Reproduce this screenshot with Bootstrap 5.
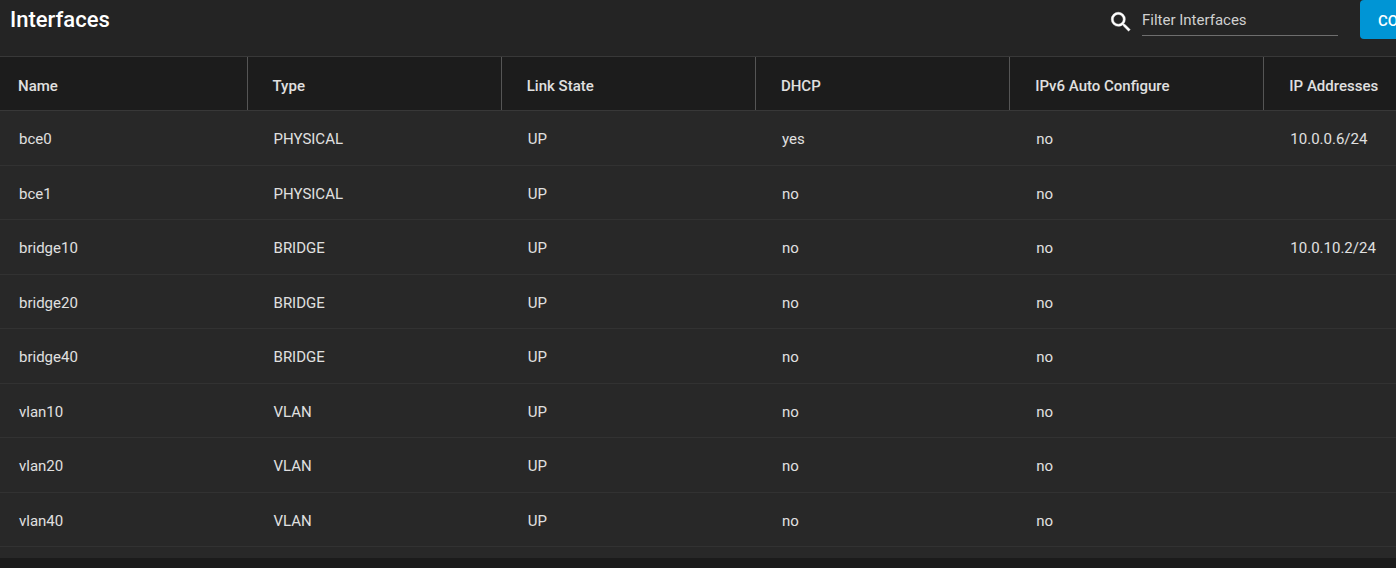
<!DOCTYPE html>
<html lang="en">
<head>
<meta charset="utf-8">
<meta name="viewport" content="width=device-width, initial-scale=1">
<title>Interfaces</title>
<link href="https://cdn.jsdelivr.net/npm/bootstrap@5.3.0/dist/css/bootstrap.min.css" rel="stylesheet">
<style>
  body { background: #1b1b1b; color: #e0e0e0; font-family: Roboto, "Liberation Sans", sans-serif; font-size: 15px; line-height: 20px; }
  .panel { background: #282828; padding-bottom: 11px; }
  .toolbar { background: #242424; height: 56px; padding-left: 10px; }
  .title { font-size: 22px; line-height: 40px; font-weight: 500; color: #fff; }
  .search-icon { width: 26px; height: 26px; margin: 9px 8px 0 0; fill: #fff; stroke: #fff; stroke-width: .4; }
  .filter { width: 196px; height: 36px; padding: 4px 0 0; color: #e0e0e0; background: transparent; border: 0; border-bottom: 1px solid #6e6e6e; border-radius: 0; outline: 0; }
  .filter::placeholder { color: #d0d0d0; opacity: 1; }
  .columns-slot { width: 36px; margin-left: 22px; }
  .btn-columns { --bs-btn-color: #fff; --bs-btn-bg: #0095d5; --bs-btn-border-color: #0095d5; --bs-btn-hover-color: #fff; --bs-btn-hover-bg: #0085be; height: 39px; padding: 3px 18px 0; border: 0; border-radius: 4px; font-size: 15px; font-weight: 500; }
  .iface-table { table-layout: fixed; font-size: 15px; line-height: 20px; border-collapse: separate; border-spacing: 0; }
  .iface-table th, .iface-table td { color: #e0e0e0; vertical-align: middle; white-space: nowrap; }
  .iface-table th { height: 55px; padding: 4px 0 0 26px; background: #1c1c1c; font-weight: 500; border-top: 1px solid #383838; border-bottom: 1px solid #383838; }
  .iface-table th + th { background: linear-gradient(#555, #555) left / 1px 100% no-repeat #1c1c1c; }
  .iface-table td { padding: 2px 0 0 27px; background: #282828; border-bottom: 1px solid #323232; }
  .iface-table th:first-child { padding-left: 18px; }
  .iface-table td:first-child { padding-left: 19px; }
  .iface-table tbody tr:nth-child(odd) td { height: 55px; }
  .iface-table tbody tr:nth-child(even) td { height: 54px; }
  .col-name { width: 17.66%; }
  .col-info { width: 18.21%; }
</style>
</head>
<body>
<main class="panel">
  <header class="toolbar d-flex align-items-start">
    <h1 class="title m-0 me-auto">Interfaces</h1>
    <label for="filter" class="d-flex" aria-label="Filter">
      <svg class="search-icon" viewBox="0 0 24 24" aria-hidden="true"><path d="M15.5 14h-.79l-.28-.27A6.47 6.47 0 0 0 16 9.5 6.5 6.5 0 1 0 9.5 16c1.61 0 3.09-.59 4.23-1.57l.27.28v.79l5 4.99L20.49 19l-4.99-5zm-6 0C7.01 14 5 11.99 5 9.5S7.01 5 9.5 5 14 7.01 14 9.5 11.99 14 9.5 14z"/></svg>
    </label>
    <input id="filter" class="filter" type="text" placeholder="Filter Interfaces">
    <div class="columns-slot flex-shrink-0 overflow-hidden"><button type="button" class="btn btn-columns">COLUMNS</button></div>
  </header>
  <table class="table iface-table m-0">
    <colgroup><col class="col-name"><col class="col-info"><col class="col-info"><col class="col-info"><col class="col-info"><col></colgroup>
    <thead>
      <tr><th scope="col">Name</th><th scope="col">Type</th><th scope="col">Link State</th><th scope="col">DHCP</th><th scope="col">IPv6 Auto Configure</th><th scope="col">IP Addresses</th></tr>
    </thead>
    <tbody>
      <tr><td>bce0</td><td>PHYSICAL</td><td>UP</td><td>yes</td><td>no</td><td>10.0.0.6/24</td></tr>
      <tr><td>bce1</td><td>PHYSICAL</td><td>UP</td><td>no</td><td>no</td><td></td></tr>
      <tr><td>bridge10</td><td>BRIDGE</td><td>UP</td><td>no</td><td>no</td><td>10.0.10.2/24</td></tr>
      <tr><td>bridge20</td><td>BRIDGE</td><td>UP</td><td>no</td><td>no</td><td></td></tr>
      <tr><td>bridge40</td><td>BRIDGE</td><td>UP</td><td>no</td><td>no</td><td></td></tr>
      <tr><td>vlan10</td><td>VLAN</td><td>UP</td><td>no</td><td>no</td><td></td></tr>
      <tr><td>vlan20</td><td>VLAN</td><td>UP</td><td>no</td><td>no</td><td></td></tr>
      <tr><td>vlan40</td><td>VLAN</td><td>UP</td><td>no</td><td>no</td><td></td></tr>
    </tbody>
  </table>
</main>
<script src="https://cdn.jsdelivr.net/npm/bootstrap@5.3.0/dist/js/bootstrap.bundle.min.js"></script>
</body>
</html>
